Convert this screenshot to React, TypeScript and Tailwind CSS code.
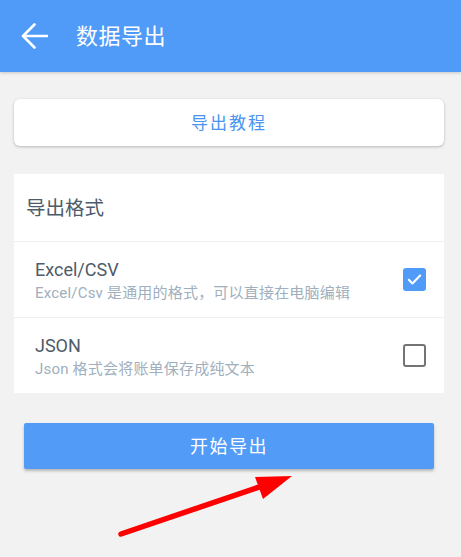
import React from "react";

const font = { fontFamily: '"Roboto", "Noto Sans CJK SC", sans-serif' };

function Checkbox({ checked }: { checked: boolean }) {
  if (checked) {
    return (
      <div className="w-[23px] h-[23px] rounded-[3px] bg-[#519bf8] flex items-center justify-center">
        <svg width="17" height="17" viewBox="0 0 24 24">
          <path d="M4 12.5l5 5L20 6.5" fill="none" stroke="#ffffff" strokeWidth="3" strokeLinecap="round" strokeLinejoin="round" />
        </svg>
      </div>
    );
  }
  return <div className="w-[23px] h-[23px] rounded-[3px] border-[2.5px] border-[#747474] bg-white" />;
}

function Row({ title, sub, checked }: { title: string; sub: string; checked: boolean }) {
  return (
    <div className="h-[76px] flex items-center pl-[21px] pr-[18px] border-t border-[#efefef]">
      <div className="flex-1 flex flex-col pt-[3px]">
        <div className="text-[18px] leading-[22px] text-[#4e5b69]">{title}</div>
        <div className="text-[15px] leading-[22px] tracking-[0.2px] text-[#a0afbd] mt-[1px]">{sub}</div>
      </div>
      <Checkbox checked={checked} />
    </div>
  );
}

export default function App() {
  return (
    <div className="relative w-[461px] h-[557px] bg-[#f2f2f2] overflow-hidden" style={font}>
      <div className="h-[72px] bg-[#519bf8] flex items-center pl-[21px] shadow-[0_1px_3px_rgba(0,0,0,0.18)] relative z-10">
        <svg width="27" height="26" viewBox="0 0 27 26">
          <path d="M2 13H26M13.5 1.5L2 13l11.5 11.5" fill="none" stroke="#ffffff" strokeWidth="2.6" strokeLinecap="round" strokeLinejoin="round" />
        </svg>
        <div className="ml-[28px] text-[22px] text-white tracking-[0.5px]">数据导出</div>
      </div>

      <div className="pt-[27px] pl-[14px]">
        <div className="w-[430px] h-[47px] pt-[3px] bg-white rounded-[6px] shadow-[0_1px_3px_rgba(0,0,0,0.25)] flex items-center justify-center text-[17px] tracking-[2px] text-[#4a94f2]">
          导出教程
        </div>

        <div className="mt-[28px] w-[430px] bg-white">
          <div className="h-[67px] flex items-center pl-[12px] pt-[3px] text-[19.5px] text-[#4e5b69]">导出格式</div>
          <Row title="Excel/CSV" sub="Excel/Csv 是通用的格式，可以直接在电脑编辑" checked={true} />
          <Row title="JSON" sub="Json 格式会将账单保存成纯文本" checked={false} />
        </div>

        <div className="mt-[30px] ml-[10px] w-[410px] h-[46px] bg-[#529cf8] rounded-[2px] shadow-[0_2px_3px_rgba(0,0,0,0.25)] flex items-center justify-center text-[18px] tracking-[1.5px] text-white">
          开始导出
        </div>
      </div>

      <svg className="absolute left-0 top-0 pointer-events-none" width="461" height="557" viewBox="0 0 461 557">
        <line x1="121" y1="534" x2="268" y2="484" stroke="#ff0000" strokeWidth="5.5" strokeLinecap="round" />
        <polygon points="255,477 292,476 263,499" fill="#ff0000" />
      </svg>
    </div>
  );
}
